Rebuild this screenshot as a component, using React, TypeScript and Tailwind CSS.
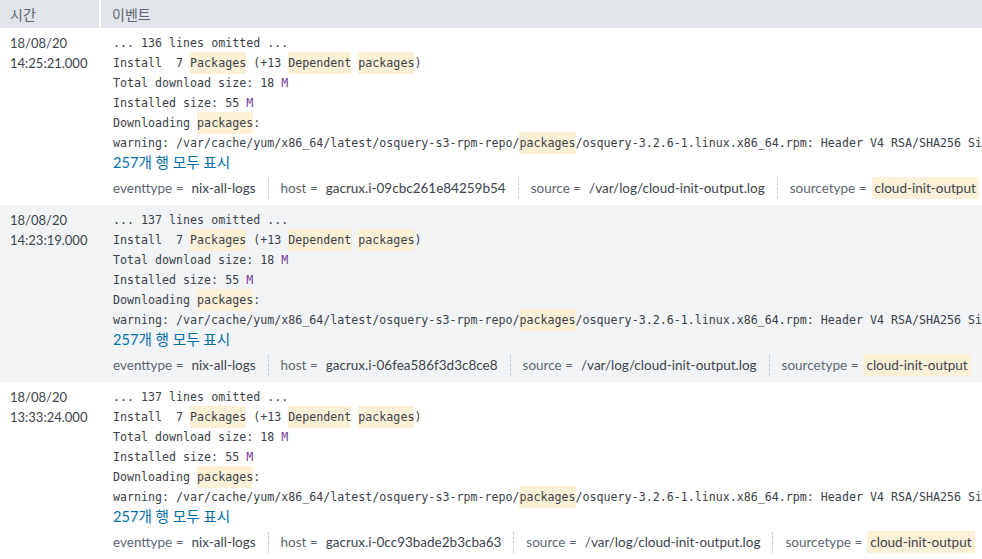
const mono = "font-['DejaVu_Sans_Mono',monospace] text-[11.65px]";

type Ev = {
  date: string;
  time: string;
  omitted: number;
  host: string;
};

const events: Ev[] = [
  { date: "18/08/20", time: "14:25:21.000", omitted: 136, host: "gacrux.i-09cbc261e84259b54" },
  { date: "18/08/20", time: "14:23:19.000", omitted: 137, host: "gacrux.i-06fea586f3d3c8ce8" },
  { date: "18/08/20", time: "13:33:24.000", omitted: 137, host: "gacrux.i-0cc93bade2b3cba63" },
];

function Hl({ children }: { children: React.ReactNode }) {
  return <span className="bg-[#fcf0d6] py-[4px]">{children}</span>;
}

function Field({ k, v, hl }: { k: string; v: string; hl?: boolean }) {
  return (
    <div className="flex items-center whitespace-nowrap">
      <span className="text-[#5c6773]">{k} =</span>
      {hl ? (
        <span className="ml-[5px] bg-[#fcf0d6] px-[3px] leading-[22px] text-[#3c444d]">{v}</span>
      ) : (
        <span className="ml-[8px] text-[#3c444d]">{v}</span>
      )}
    </div>
  );
}

function Sep() {
  return <div className="mx-[12px] h-[21px] border-l border-dashed border-[#c3cbd4]" />;
}

function Row({ ev, odd }: { ev: Ev; odd: boolean }) {
  return (
    <div className={`flex h-[177px] ${odd ? "bg-[#f2f4f5]" : "bg-white"}`}>
      <div className="w-[103px] shrink-0 pl-[10px] pt-[5px] text-[13px] leading-[20px] text-[#3c444d]">
        <div>{ev.date}</div>
        <div>{ev.time}</div>
      </div>
      <div className="min-w-0 flex-1 overflow-hidden pl-[10px] pt-[5px]">
        <div className={`${mono} leading-[20px] whitespace-pre text-[#3a4149]`}>
          <div>... {ev.omitted} lines omitted ...</div>
          <div>
            Install  7 <Hl>Packages</Hl> (+13 <Hl>Dependent</Hl> <Hl>packages</Hl>)
          </div>
          <div>
            Total download size: 18 <span className="text-[#7a3d99]">M</span>
          </div>
          <div>
            Installed size: 55 <span className="text-[#7a3d99]">M</span>
          </div>
          <div>
            Downloading <Hl>packages</Hl>:
          </div>
          <div>
            warning: /var/cache/yum/x86_64/latest/osquery-s3-rpm-repo/<Hl>packages</Hl>/osquery-3.2.6-1.linux.x86_64.rpm: Header V4 RSA/SHA256 Si
          </div>
        </div>
        <div className="font-['Lato','Noto_Sans_CJK_KR',sans-serif] text-[14.6px] leading-[20px] text-[#006eaa]">
          257개 행 모두 표시
        </div>
        <div className="mt-[4px] flex h-[22px] items-center text-[13.5px]">
          <Field k="eventtype" v="nix-all-logs" />
          <Sep />
          <Field k="host" v={ev.host} />
          <Sep />
          <Field k="source" v="/var/log/cloud-init-output.log" />
          <Sep />
          <Field k="sourcetype" v="cloud-init-output" hl />
        </div>
      </div>
    </div>
  );
}

export default function App() {
  return (
    <div className="h-[559px] w-[982px] overflow-hidden bg-white font-['Lato','Noto_Sans_CJK_KR',sans-serif]">
      <div className="flex h-[28px] items-center bg-[#e1e4e8] text-[14px] text-[#5c6773]">
        <div className="flex h-full w-[101px] items-center border-r-2 border-white pl-[10px] font-['Noto_Sans_CJK_KR',sans-serif]">
          시간
        </div>
        <div className="pl-[11px] font-['Noto_Sans_CJK_KR',sans-serif]">이벤트</div>
      </div>
      {events.map((ev, i) => (
        <Row key={i} ev={ev} odd={i === 1} />
      ))}
    </div>
  );
}
